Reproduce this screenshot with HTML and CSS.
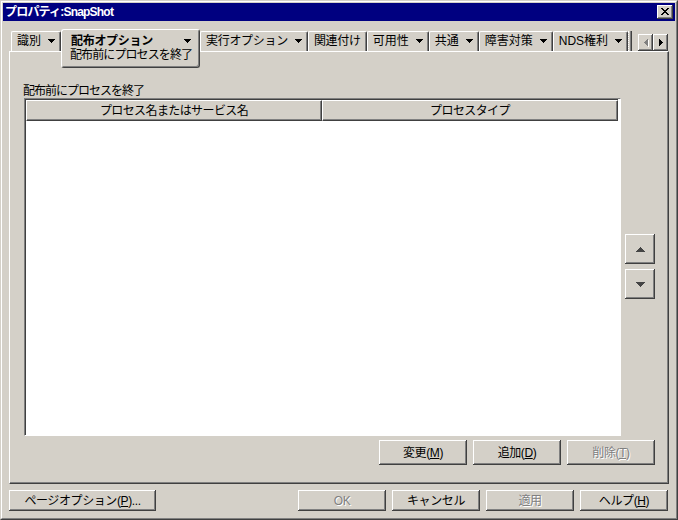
FILE: index.html
```html
<!DOCTYPE html>
<html lang="ja">
<head>
<meta charset="utf-8">
<title>プロパティ:SnapShot</title>
<link rel="stylesheet" href="styles.css">
</head>
<body>
<div class="window">
  <div class="frame">
    <div class="titlebar">
      <span class="title">プロパティ:SnapShot</span>
      <button class="close-btn" aria-label="閉じる">
        <svg width="8" height="7" viewBox="0 0 8 7" shape-rendering="crispEdges"><path d="M0 0h2v1H0zM6 0h2v1H6zM1 1h2v1H1zM5 1h2v1H5zM2 2h4v1H2zM3 3h2v1H3zM2 4h4v1H2zM1 5h2v1H1zM5 5h2v1H5zM0 6h2v1H0zM6 6h2v1H6z" fill="#000"/></svg>
      </button>
    </div>
    <div class="content">
      <div class="tabs">
        <div class="tab"><span class="tab-text">識別</span><svg class="dd" width="7" height="4" viewBox="0 0 7 4" shape-rendering="crispEdges"><path d="M0 0h7v1H0zM1 1h5v1H1zM2 2h3v1H2zM3 3h1v1H3z"/></svg></div>
        <div class="tab tab-active">
          <div class="tab-pop">
            <div class="pop-head"><span class="pop-title">配布オプション</span><svg class="dd" width="7" height="4" viewBox="0 0 7 4" shape-rendering="crispEdges"><path d="M0 0h7v1H0zM1 1h5v1H1zM2 2h3v1H2zM3 3h1v1H3z"/></svg></div>
            <div class="pop-sub">配布前にプロセスを終了</div>
          </div>
        </div>
        <div class="tab"><span class="tab-text tab-kana">実行オプション</span><svg class="dd" width="7" height="4" viewBox="0 0 7 4" shape-rendering="crispEdges"><path d="M0 0h7v1H0zM1 1h5v1H1zM2 2h3v1H2zM3 3h1v1H3z"/></svg></div>
        <div class="tab tab-plain"><span class="tab-text tab-kana">関連付け</span></div>
        <div class="tab"><span class="tab-text">可用性</span><svg class="dd" width="7" height="4" viewBox="0 0 7 4" shape-rendering="crispEdges"><path d="M0 0h7v1H0zM1 1h5v1H1zM2 2h3v1H2zM3 3h1v1H3z"/></svg></div>
        <div class="tab"><span class="tab-text">共通</span><svg class="dd" width="7" height="4" viewBox="0 0 7 4" shape-rendering="crispEdges"><path d="M0 0h7v1H0zM1 1h5v1H1zM2 2h3v1H2zM3 3h1v1H3z"/></svg></div>
        <div class="tab"><span class="tab-text">障害対策</span><svg class="dd" width="7" height="4" viewBox="0 0 7 4" shape-rendering="crispEdges"><path d="M0 0h7v1H0zM1 1h5v1H1zM2 2h3v1H2zM3 3h1v1H3z"/></svg></div>
        <div class="tab"><span class="tab-text">NDS権利</span><svg class="dd" width="7" height="4" viewBox="0 0 7 4" shape-rendering="crispEdges"><path d="M0 0h7v1H0zM1 1h5v1H1zM2 2h3v1H2zM3 3h1v1H3z"/></svg></div>
        <div class="tab tab-cut"></div>
        <div class="tab-scroll">
          <button class="scroll-btn" aria-label="前へ"><svg width="4" height="7" viewBox="0 0 4 7" shape-rendering="crispEdges"><path d="M4 1h1v7H4z" fill="#fff"/><path d="M3 0h1v7H3zM2 1h1v5H2zM1 2h1v3H1zM0 3h1v1H0z" fill="#808080"/></svg></button>
          <button class="scroll-btn" aria-label="次へ"><svg width="4" height="7" viewBox="0 0 4 7" shape-rendering="crispEdges"><path d="M0 0h1v7H0zM1 1h1v5H1zM2 2h1v3H2zM3 3h1v1H3z" fill="#000"/></svg></button>
        </div>
      </div>

      <div class="panel">
        <div class="group-label">配布前にプロセスを終了</div>
        <div class="list-row">
          <div class="list">
            <div class="list-header">
              <div class="col-head">プロセス名またはサービス名</div>
              <div class="col-head">プロセスタイプ</div>
            </div>
            <div class="list-body"></div>
          </div>
          <div class="side-buttons">
            <button class="btn btn-square" aria-label="上へ"><svg width="9" height="5" viewBox="0 0 9 5" shape-rendering="crispEdges"><path d="M4 0h1v1H4zM3 1h3v1H3zM2 2h5v1H2zM1 3h7v1H1zM0 4h9v1H0z" fill="#454545"/></svg></button>
            <button class="btn btn-square" aria-label="下へ"><svg width="9" height="5" viewBox="0 0 9 5" shape-rendering="crispEdges"><path d="M0 0h9v1H0zM1 1h7v1H1zM2 2h5v1H2zM3 3h3v1H3zM4 4h1v1H4z" fill="#454545"/></svg></button>
          </div>
        </div>
        <div class="btn-row">
          <button class="btn btn-panel">変更(<u>M</u>)</button>
          <button class="btn btn-panel">追加(<u>D</u>)</button>
          <button class="btn btn-panel btn-disabled">削除(<u>T</u>)</button>
        </div>
      </div>

      <div class="footer">
        <button class="btn btn-page">ページオプション(<u>P</u>)...</button>
        <div class="footer-right">
          <button class="btn btn-foot btn-disabled">OK</button>
          <button class="btn btn-foot">キャンセル</button>
          <button class="btn btn-foot btn-disabled">適用</button>
          <button class="btn btn-foot">ヘルプ(<u>H</u>)</button>
        </div>
      </div>
    </div>
  </div>
</div>
</body>
</html>
```

FILE: styles.css
```css
* {
  box-sizing: border-box;
}

html, body {
  margin: 0;
  padding: 0;
  background: #d4d0c8;
}

body {
  font-family: "Liberation Sans", "Noto Sans CJK JP", sans-serif;
  font-size: 12px;
  color: #000;
}

button {
  font-family: inherit;
  font-size: 12px;
  color: #000;
  margin: 0;
  padding: 0;
  cursor: default;
}

.window {
  width: 678px;
  height: 520px;
  border: 1px solid;
  border-color: #d4d0c8 #404040 #404040 #d4d0c8;
  background: #d4d0c8;
}

.frame {
  height: 100%;
  border: 1px solid;
  border-color: #ffffff #808080 #808080 #ffffff;
  padding: 1px;
  display: flex;
  flex-direction: column;
}

.titlebar {
  height: 18px;
  background: #000080;
  display: flex;
  align-items: center;
  justify-content: space-between;
  padding: 0 2px 0 2px;
  flex-shrink: 0;
}

.title {
  color: #fff;
  font-weight: bold;
  font-size: 12px;
  line-height: 14px;
  letter-spacing: -0.8px;
}

.close-btn {
  width: 16px;
  height: 14px;
  background: #d4d0c8;
  border: none;
  box-shadow: inset -1px -1px #404040, inset 1px 1px #ffffff, inset -2px -2px #808080;
  display: flex;
  align-items: center;
  justify-content: center;
  padding: 0 1px 1px 0;
}

.close-btn svg {
  display: block;
}

.content {
  flex: 1;
  display: flex;
  flex-direction: column;
  padding: 10px 6px 0 6px;
}

/* Tabs */
.tabs {
  height: 20px;
  display: flex;
  align-items: flex-end;
  padding-left: 2px;
  position: relative;
  z-index: 2;
}

.tab {
  height: 20px;
  display: flex;
  align-items: center;
  padding: 0 5px 1px 5px;
  border-top: 1px solid #fff;
  border-left: 1px solid #fff;
  border-right: 1px solid #404040;
  box-shadow: inset -1px 0 #808080;
  border-radius: 2px 2px 0 0;
  line-height: 14px;
  white-space: nowrap;
}

.tab-text {
  margin-right: 7px;
}

.tab-kana {
  letter-spacing: -0.3px;
}

.tab-plain .tab-text {
  margin-right: 0;
}

.dd {
  display: block;
  fill: #000;
  flex-shrink: 0;
}

.tab-active {
  width: 139px;
  position: relative;
  border: none;
  box-shadow: none;
  padding: 0;
}

.tab-pop {
  position: absolute;
  left: 0;
  top: -2px;
  width: 139px;
  height: 39px;
  background: #d4d0c8;
  border-top: 1px solid #fff;
  border-left: 1px solid #fff;
  border-right: 1px solid #404040;
  border-bottom: 1px solid #404040;
  box-shadow: inset -1px -1px #808080;
  border-radius: 3px;
  padding: 4px 8px 0 9px;
  z-index: 3;
}

.pop-head {
  display: flex;
  align-items: center;
  justify-content: space-between;
  height: 14px;
}

.pop-title {
  font-weight: bold;
  line-height: 14px;
  letter-spacing: -0.3px;
}

.pop-sub {
  margin-left: -1px;
  line-height: 14px;
  letter-spacing: -0.9px;
}

.tab-cut {
  width: 4px;
  padding: 0;
  border-left: 1px dotted #fff;
  border-top: none;
  border-radius: 0;
  box-shadow: inset -1px 0 #808080;
}

.tab-scroll {
  margin-left: auto;
  margin-right: 1px;
  display: flex;
  align-self: flex-end;
}

.scroll-btn {
  width: 15px;
  height: 17px;
  background: #d4d0c8;
  border: none;
  box-shadow: inset -1px -1px #404040, inset 1px 1px #ffffff, inset -2px -2px #808080;
  display: flex;
  align-items: center;
  justify-content: center;
}

.scroll-btn svg {
  display: block;
  overflow: visible;
}

/* Panel */
.panel {
  height: 433px;
  border-top: 1px solid #fff;
  border-left: 1px solid #fff;
  border-right: 1px solid #404040;
  border-bottom: 1px solid #404040;
  box-shadow: inset -1px -1px #808080;
  display: flex;
  flex-direction: column;
  padding: 33px 13px 18px 14px;
}

.group-label {
  line-height: 12px;
  height: 12px;
  margin-left: -1px;
  margin-bottom: 1px;
  letter-spacing: -1px;
}

.list-row {
  flex: 1;
  display: flex;
  gap: 4px;
  min-height: 0;
}

.list {
  flex: 1;
  display: flex;
  flex-direction: column;
  border: 1px solid;
  border-color: #808080 #ffffff #ffffff #808080;
  background: #fff;
}

.list-header {
  display: flex;
  height: 22px;
  border-top: 1px solid #404040;
  border-left: 1px solid #404040;
  margin-right: 2px;
  background: #fff;
}

.col-head {
  flex: 1;
  background: #d4d0c8;
  border-top: 1px solid #fff;
  border-left: 1px solid #fff;
  border-right: 1px solid #404040;
  border-bottom: 1px solid #404040;
  box-shadow: inset -1px -1px #808080;
  display: flex;
  align-items: center;
  justify-content: center;
  line-height: 14px;
  letter-spacing: -0.6px;
}

.list-body {
  flex: 1;
  background: #fff;
  border-left: 1px solid #404040;
}

.side-buttons {
  width: 30px;
  display: flex;
  flex-direction: column;
  justify-content: center;
  gap: 5px;
  padding-bottom: 1px;
}

.btn {
  background: #d4d0c8;
  border: none;
  box-shadow: inset -1px -1px #404040, inset 1px 1px #ffffff, inset -2px -2px #808080, inset 2px 2px #d4d0c8;
  display: flex;
  align-items: center;
  justify-content: center;
  line-height: 14px;
  letter-spacing: -0.4px;
  white-space: nowrap;
}

.btn u {
  text-decoration: underline;
  text-underline-offset: 1px;
}

.btn-square {
  width: 30px;
  height: 30px;
}

.btn-square svg {
  display: block;
}

.btn-row {
  display: flex;
  justify-content: flex-end;
  gap: 6px;
  margin-top: 4px;
  height: 25px;
}

.btn-panel {
  width: 88px;
  height: 25px;
}

.btn-disabled {
  color: #808080;
  text-shadow: 1px 1px 0 #fff;
}

/* Footer */
.footer {
  display: flex;
  justify-content: space-between;
  margin-top: 6px;
  padding-right: 1px;
}

.btn-page {
  width: 147px;
  height: 21px;
}

.footer-right {
  display: flex;
  gap: 6px;
}

.btn-foot {
  width: 88px;
  height: 21px;
}
```
